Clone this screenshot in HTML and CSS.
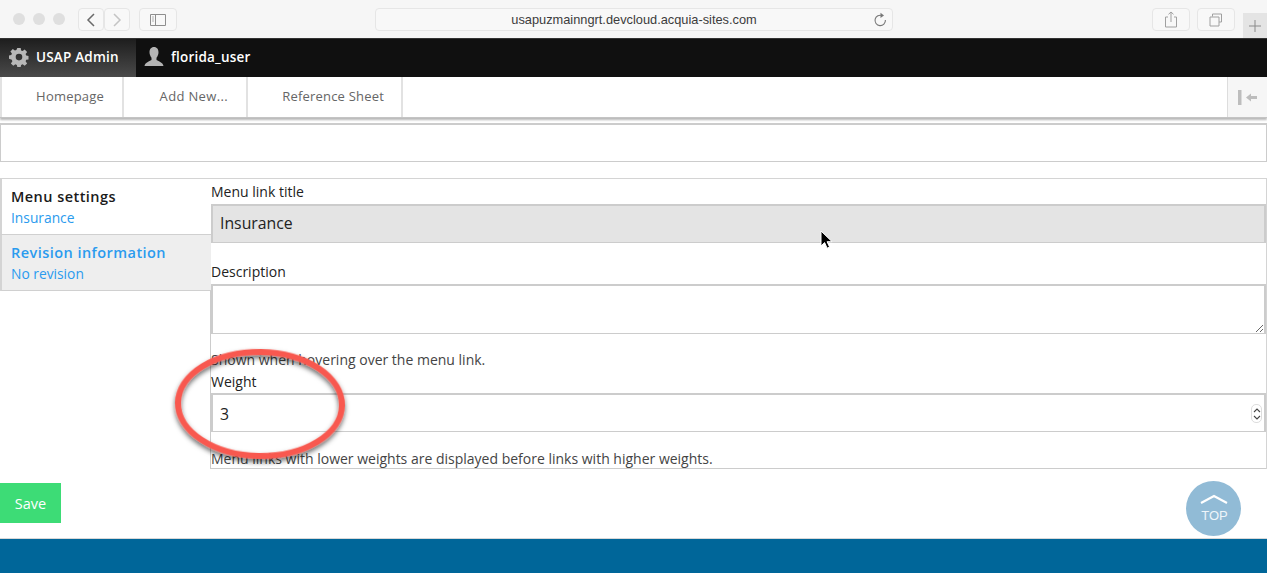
FILE: index.html
```html
<!DOCTYPE html>
<html lang="en">
<head>
<meta charset="utf-8">
<title>USAP Admin</title>
<link rel="stylesheet" href="styles.css">
</head>
<body>
<header class="chrome">
  <div class="lights"><i></i><i></i><i></i></div>
  <div class="btn-pair">
    <span class="cbtn cbtn-nav"><svg width="12" height="16" viewBox="0 0 12 16"><path d="M9 2 3 8l6 6" fill="none" stroke="#6a6a6a" stroke-width="1.5"/></svg></span>
    <span class="cbtn cbtn-nav"><svg width="12" height="16" viewBox="0 0 12 16"><path d="m3 2 6 6-6 6" fill="none" stroke="#c4c4c4" stroke-width="1.5"/></svg></span>
  </div>
  <span class="cbtn cbtn-side"><svg width="16" height="12" viewBox="0 0 16 12"><path d="M.5.5h15v11H.5zM5.5.5v11" fill="none" stroke="#8e8e8e"/><path d="M2 3h2M2 5h2M2 7h2" stroke="#b0b0b0"/></svg></span>
  <div class="url">
    <span class="url-text">usapuzmainngrt.devcloud.acquia-sites.com</span>
    <svg class="reload" width="14" height="16" viewBox="0 0 14 16"><path d="M9.2 3.6A5.2 5.2 0 1 0 12.4 8" fill="none" stroke="#777" stroke-width="1.1"/><path d="M7.5.8 11 3.4 7.5 6z" fill="#777"/></svg>
  </div>
  <span class="cbtn cbtn-side cbtn-share"><svg width="14" height="17" viewBox="0 0 14 17"><path d="M4 6H1.5v10h11V6H10M7 11V1M4.5 3.300 7 1l2.500 2.300" fill="none" stroke="#a0a0a0"/></svg></span>
  <span class="cbtn cbtn-side cbtn-tabs"><svg width="14" height="14" viewBox="0 0 14 14"><path d="M3.500 3.500V1h9v8H10M1 4h9v9H1z" fill="none" stroke="#a0a0a0"/></svg></span>
  <span class="newtab"><svg width="12" height="12" viewBox="0 0 12 12"><path d="M6 0v12M0 6h12" stroke="#8a8a8a"/></svg></span>
</header>

<nav class="adminbar">
  <a class="admin-home"><svg width="20" height="20" viewBox="0 0 20 20"><path fill="#b8b8b8" fill-rule="evenodd" d="M8.300 1h3.400l.4 2.500 1.500.6 2.100-1.500 2.400 2.400-1.500 2.100.6 1.500 2.300.4v3.400l-2.300.4-.6 1.500 1.500 2.100-2.400 2.400-2.100-1.500-1.500.6-.4 2.100H8.300l-.4-2.100-1.500-.6-2.100 1.500-2.400-2.400 1.500-2.100-.6-1.500L0 11.800V8.400l2.300-.4.6-1.500-1.500-2.100 2.400-2.400 2.100 1.500 1.500-.6zM10 6.800a3.300 3.300 0 1 0 0 6.600 3.300 3.300 0 0 0 0-6.600z"/></svg>USAP Admin</a>
  <a class="admin-user"><svg width="20" height="22" viewBox="0 0 20 22"><path fill="#b4b4b4" d="M10 1c3 0 4.500 2.300 4.500 5.300 0 2.300-1 4.200-2 5.400v2.300c1 .9 6.500 2.200 7 6H.5c.5-3.800 6-5.100 7-6v-2.300c-1-1.200-2-3.100-2-5.400C5.500 3.300 7 1 10 1z"/></svg>florida_user</a>
</nav>

<nav class="tabs">
  <a class="tab tab-1">Homepage</a>
  <a class="tab tab-2">Add New...</a>
  <a class="tab tab-3">Reference Sheet</a>
  <span class="collapse"><svg width="20" height="15" viewBox="0 0 20 15"><path fill="#bdbdbd" d="M0 0h3.500v15H0zM8 7.500l5-4V6h6v3h-6v2.500z"/></svg></span>
</nav>

<div class="clipped-field"></div>

<section class="panel">
  <aside class="vtabs">
    <div class="vtab vtab-active">
      <strong>Menu settings</strong>
      <span>Insurance</span>
    </div>
    <div class="vtab vtab-idle">
      <strong>Revision information</strong>
      <span>No revision</span>
    </div>
    <div class="vtab-fill"></div>
  </aside>
  <form class="pane">
    <label class="lbl lbl-title">Menu link title</label>
    <input class="field field-grey" type="text" value="Insurance">
    <label class="lbl lbl-desc">Description</label>
    <textarea class="area"></textarea>
    <p class="hint hint-desc">Shown when hovering over the menu link.</p>
    <label class="lbl lbl-weight">Weight</label>
    <div class="field field-num">3
      <span class="stepper"><svg width="8" height="16" viewBox="0 0 8 16"><path d="m1 6 3-3 3 3M1 10l3 3 3-3" fill="none" stroke="#444" stroke-width="1.100"/></svg></span>
    </div>
    <p class="hint hint-weight">Menu links with lower weights are displayed before links with higher weights.</p>
  </form>
</section>

<button class="save" type="button">Save</button>

<footer class="footer"></footer>

<div class="top-btn">
  <svg width="30" height="12" viewBox="0 0 30 12"><path d="M2 10 15 3l13 7" fill="none" stroke="#fff" stroke-width="2.200"/></svg>
  <span>TOP</span>
</div>

<svg class="ring" width="190" height="130" viewBox="0 0 190 130">
  <defs><filter id="ringShadow" x="-20%" y="-20%" width="140%" height="140%"><feDropShadow dx="0" dy="3" stdDeviation="2.500" flood-color="#000" flood-opacity=".6"/></filter></defs>
  <ellipse cx="94" cy="66" rx="82" ry="52" transform="rotate(1 94 66)" fill="none" stroke="#f8594f" stroke-width="6" filter="url(#ringShadow)"/>
</svg>

<svg class="cursor" width="14" height="20" viewBox="0 0 14 20"><path d="M1 1v15l3.600-3.400 2.500 5.600 2.500-1.100-2.500-5.400h5z" fill="#000" stroke="#fff" stroke-width="1"/></svg>
</body>
</html>
```

FILE: styles.css
```css
* { box-sizing: border-box; }
html, body { margin: 0; height: 573px; overflow: hidden; }
body {
  position: relative;
  display: flex;
  flex-direction: column;
  font-family: "Open Sans", "Liberation Sans", sans-serif;
  background: #fff;
  color: #333;
}

/* browser chrome */
.chrome {
  height: 38px;
  flex: none;
  display: flex;
  align-items: flex-start;
  background: #f6f6f6;
  padding-top: 8px;
  position: relative;
}
.lights { display: flex; gap: 8px; margin: 5px 0 0 13px; }
.lights i { width: 12px; height: 12px; border-radius: 50%; background: #dfdfdf; }
.btn-pair { display: flex; margin-left: 13px; }
.cbtn {
  display: flex;
  align-items: center;
  justify-content: center;
  height: 23px;
  border: 1px solid #e6e6e6;
  border-radius: 4px;
  background: #f8f8f8;
}
.cbtn-nav { width: 26px; }
.cbtn-side { width: 38px; margin-left: 9px; }
.url {
  width: 518px;
  height: 23px;
  margin-left: 198px;
  display: flex;
  align-items: center;
  justify-content: center;
  position: relative;
  background: #f8f8f8;
  border: 1px solid #e6e6e6;
  border-radius: 4px;
  font-family: "Liberation Sans", sans-serif;
  font-size: 12.800px;
  color: #3c3c3c;
}
.reload { position: absolute; right: 5px; top: 3px; }
.cbtn-share { margin-left: 259px; }
.cbtn-tabs { margin-left: 7px; }
.newtab {
  position: absolute;
  right: 0;
  top: 13px;
  width: 24px;
  height: 25px;
  background: #e4e4e4;
  display: flex;
  align-items: center;
  justify-content: center;
}

/* admin bar */
.adminbar {
  height: 39px;
  flex: none;
  display: flex;
  background: #101010;
  border-top: 1px solid #333;
  color: #fff;
  font-size: 13.500px;
  font-weight: 600;
}
.adminbar a { display: flex; align-items: center; letter-spacing: .2px; padding-bottom: 2px; }
.admin-home {
  width: 136px;
  padding-left: 9px;
  gap: 7px;
  background: linear-gradient(#1e1e1e, #4a4a4a);
}
.admin-user { padding-left: 8px; gap: 7px; }

/* tab strip */
.tabs {
  height: 41px;
  flex: none;
  display: flex;
  position: relative;
  z-index: 1;
  background: #fff;
  border-bottom: 1px solid #c4c4c4;
  box-shadow: 0 2px 2px rgba(0, 0, 0, .28);
  font-size: 13px;
  color: #666;
  letter-spacing: .2px;
}
.tab {
  display: flex;
  align-items: center;
  border-left: 2px solid #e2e2e2;
  border-right: 2px solid #e2e2e2;
  justify-content: flex-end;
  padding-bottom: 2px;
}
.tab-1 { width: 124px; padding-right: 18px; }
.tab-2 { width: 124px; padding-right: 18px; border-left: 0; letter-spacing: .35px; }
.tab-3 { width: 155px; padding-right: 17px; border-left: 0; }
.collapse {
  margin-left: auto;
  width: 40px;
  display: flex;
  align-items: center;
  justify-content: center;
  background: #f6f6f6;
  border-left: 1px solid #ddd;
}

/* clipped field */
.clipped-field {
  height: 39px;
  flex: none;
  margin-top: 5px;
  border: 1px solid #ccc;
  border-top-width: 2px;
}

/* vertical tabs panel */
.panel {
  height: 291px;
  flex: none;
  margin-top: 16px;
  display: flex;
  border-top: 1px solid #d4d4d4;
  border-right: 1px solid #d4d4d4;
}
.vtabs { width: 211px; flex: none; display: flex; flex-direction: column; }
.vtab {
  height: 56px;
  padding: 8px 0 0 9px;
  display: flex;
  flex-direction: column;
  gap: 1px;
  font-size: 13.800px;
  color: #2a9bee;
  border-left: 2px solid #d4d4d4;
}
.vtab strong { font-weight: 600; font-size: 14.500px; letter-spacing: .45px; line-height: 20px; }
.vtab span { line-height: 20px; }
.vtab-active { height: 55px; }
.vtab-active strong { color: #1a1a1a; }
.vtab-idle {
  height: 57px;
  background: #eee;
  border-top: 1px solid #d0d0d0;
  border-bottom: 1px solid #d0d0d0;
}
.vtab-fill { flex: 1; border-right: 1px solid #ccc; }
.pane {
  flex: 1;
  min-width: 0;
  display: flex;
  flex-direction: column;
  border-bottom: 1px solid #ccc;
}
.lbl { font-size: 14px; line-height: 20px; color: #222; margin-bottom: 2px; }
.lbl-title { margin-top: 3px; }
.field {
  height: 39px;
  flex: none;
  width: 100%;
  border: 1px solid #ccc;
  border-width: 2px 2px 1px 2px;
  padding: 0 7px;
  font: 15.800px/38px "Open Sans", sans-serif;
  color: #222;
  position: relative;
}
.field-grey { background: #e4e4e4; outline: 0; padding-bottom: 2px; }
.lbl-desc { margin-top: 19px; }
.area {
  display: block;
  height: 50px;
  flex: none;
  width: 100%;
  border: 1px solid #ccc;
  border-width: 2px 2px 1px 2px;
  background: #fff;
  outline: 0;
}
.hint { margin: 0; font-size: 14px; line-height: 20px; color: #444; }
.hint-desc { margin-top: 16px; }
.lbl-weight { margin-top: 2px; margin-bottom: 1px; }
.stepper {
  position: absolute;
  right: 2px;
  top: 9px;
  width: 11px;
  height: 19px;
  border: 1px solid #ddd;
  border-radius: 5px;
  display: flex;
  align-items: center;
  justify-content: center;
}
.hint-weight { margin-top: 17px; }

/* save */
.save {
  width: 61px;
  height: 40px;
  flex: none;
  margin-top: 14px;
  border: 0;
  padding: 0;
  background: #3ddc76;
  color: #fff;
  font: 14.500px "Open Sans", sans-serif;
}

.footer {
  height: 35px;
  flex: none;
  margin-top: 15px;
  background: #006699;
  border-top: 1px solid #d8d8d8;
}

/* overlays */
.top-btn {
  position: absolute;
  left: 1186px;
  top: 481px;
  width: 55px;
  height: 55px;
  border-radius: 50%;
  background: #91bbd6;
  color: #eef5fa;
  display: flex;
  flex-direction: column;
  align-items: center;
  padding-top: 12px;
  font-family: "Liberation Sans", sans-serif;
  font-size: 13px;
  line-height: 14px;
}
.top-btn span { margin-top: 4px; margin-left: 2px; }
.ring { position: absolute; left: 166px; top: 338px; pointer-events: none; }
.cursor { position: absolute; left: 820px; top: 230px; }
```
